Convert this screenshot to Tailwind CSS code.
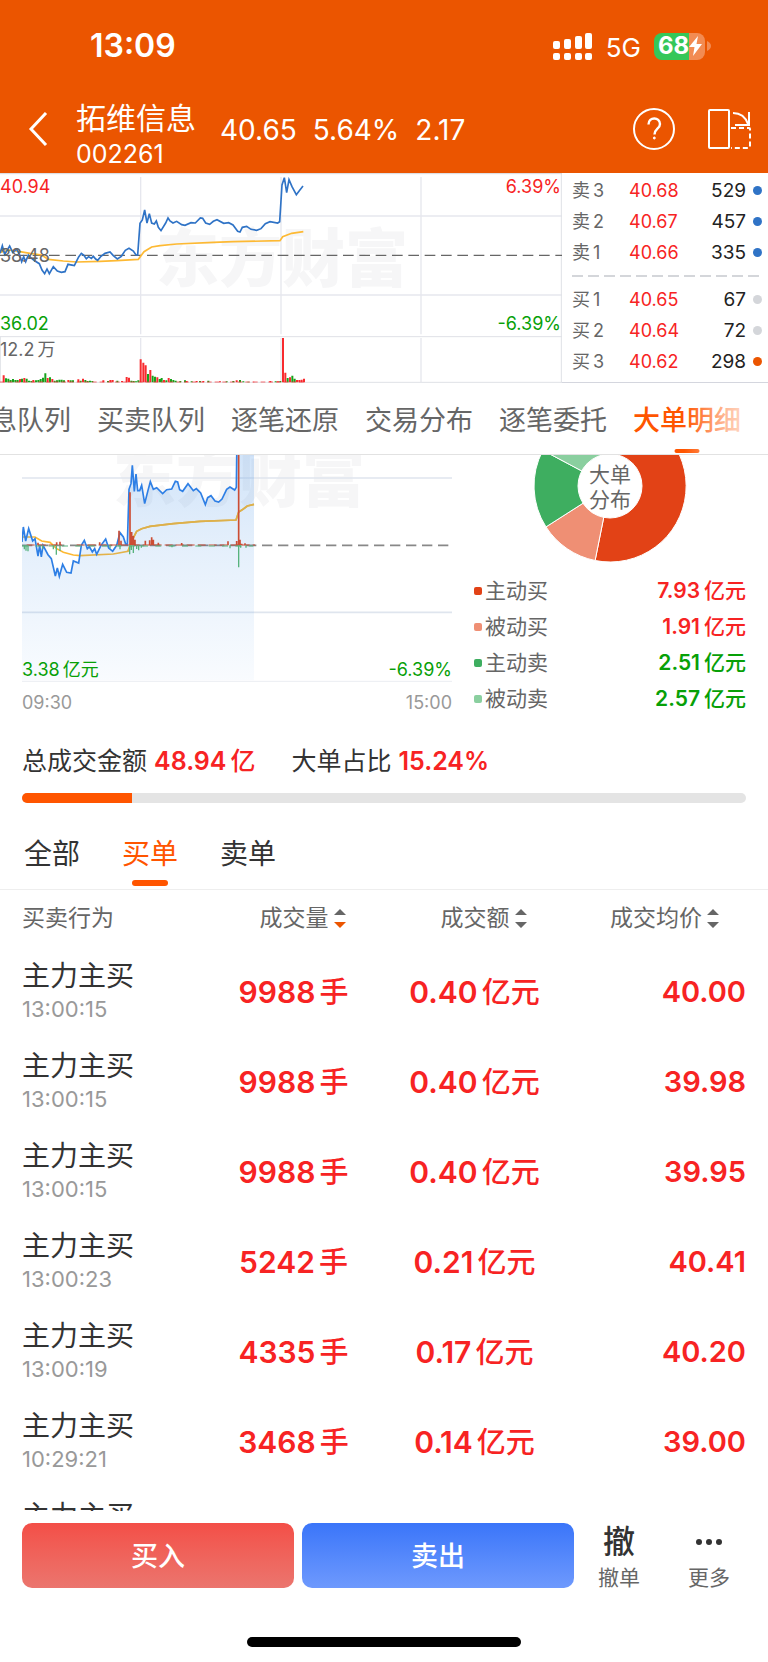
<!DOCTYPE html>
<html lang="zh-CN">
<head>
<meta charset="utf-8">
<meta name="viewport" content="width=device-width, initial-scale=1">
<title>拓维信息 002261</title>
<script src="https://cdn.jsdelivr.net/npm/@tailwindcss/browser@4"></script>
</head>
<body class="flex h-screen flex-col overflow-hidden bg-white font-[Inter,'Noto_Sans_CJK_SC',sans-serif] text-[#333]">

<header class="shrink-0 bg-[#eb5500] text-white">
  <!-- status bar -->
  <div class="flex h-[92px] items-center pr-[57px] pl-[90px]">
    <span class="text-[32px] font-semibold">13:09</span>
    <svg class="mr-[13px] ml-auto h-[28px] w-[40px]" viewBox="0 0 40 28" fill="#fff" aria-label="信号">
      <rect x="0" y="9" width="7" height="8" rx="2"/><rect x="11" y="7" width="7" height="10" rx="2"/><rect x="22" y="4" width="7" height="13" rx="2"/><rect x="32" y="1" width="7" height="16" rx="2"/>
      <rect x="0" y="21" width="7" height="7" rx="2"/><rect x="11" y="21" width="7" height="7" rx="2"/><rect x="22" y="21" width="7" height="7" rx="2"/><rect x="32" y="21" width="7" height="7" rx="2"/>
    </svg>
    <span class="mr-[13px] pt-[2px] text-[26px]">5G</span>
    <div class="flex items-center">
      <div class="flex h-[27px] w-[51px] items-center overflow-hidden rounded-[8px] bg-[linear-gradient(90deg,#34c759_68%,#f28b52_68%)] pl-[4px]">
        <span class="text-[24px] font-bold leading-none">68</span>
        <svg class="h-[20px] w-[13px]" viewBox="0 0 13 20" fill="#fff"><path d="M9 0 0 11h5.500L4 20l9-12H7.500z"/></svg>
      </div>
      <svg class="ml-[2px] h-[10px] w-[4px]" viewBox="0 0 4 10" fill="#f28b52"><path d="M0 0q4 2 4 5t-4 5z"/></svg>
    </div>
  </div>
  <!-- stock title bar -->
  <div class="flex h-[74px] items-center pr-4 pl-[28px]">
    <button type="button" aria-label="返回" class="mr-[28px]">
      <svg class="h-[34px] w-[20px]" viewBox="0 0 20 34" fill="none" stroke="#fff" stroke-width="3"><path d="M18 1 3 17l15 16"/></svg>
    </button>
    <h1 class="pt-[14px] leading-9">
      <span class="block text-[30px]">拓维信息</span>
      <span class="block text-[25px]">002261</span>
    </h1>
    <div class="ml-6 flex gap-4 pt-[2px] text-[28px]"><span>40.65</span><span>5.64%</span><span>2.17</span></div>
    <button type="button" aria-label="帮助" class="ml-auto">
      <svg class="h-[44px] w-[44px]" viewBox="0 0 44 44" fill="none" stroke="#fff" stroke-width="2"><circle cx="22" cy="22" r="20"/><path d="M16.500 17.500c0-8 11.500-8 11.500-.5 0 5-5.500 4.500-5.500 10.500" stroke-width="2.400"/><circle cx="22.300" cy="31" r="1" fill="#fff" stroke-width="1"/></svg>
    </button>
    <button type="button" aria-label="横屏" class="ml-[31px]">
      <svg class="h-[44px] w-[45px]" viewBox="0 0 45 44" fill="none" stroke="#fff" stroke-width="2"><rect x="2" y="3" width="20" height="38" rx="1"/><path d="M26 6q11 0 15 11M42 5v13H28"/><path d="M24 21h18q1 0 1 1v18q0 1-1 1H24" stroke-dasharray="5 3"/></svg>
    </button>
  </div>
  <div class="h-[7px]"></div>
</header>

<!-- intraday chart and order book -->
<section class="grid shrink-0 grid-cols-[562fr_206fr] text-[18px]">
  <div class="relative overflow-hidden">
    <div class="absolute top-[53px] left-[156px] text-[63px] leading-[64px] font-black text-[#f6f6f7]" aria-hidden="true">东方财富</div>
    <svg class="relative block w-full" viewBox="0 24 1686 630" fill="none">
      <g stroke="#e6e7ee" stroke-width="4">
        <path d="M0 153H1686M0 390H1686M422 36V508M422 519V652M843 36V508M843 519V652M1263 36V508M1263 519V652"/>
        <path d="M0 515H1686M0 652H1686M1684 24V654M1 515V652" stroke="#dfe1e6" stroke-width="3"/>
        <path d="M0 26H1686" stroke="#d8d8dc" stroke-width="3"/>
      </g>
      <path d="M0 271H1686" stroke="#666" stroke-width="4" stroke-dasharray="32 17"/>
      <path d="M0 262 30 255 60 260 90 265 125 270 145 283 190 288 230 291 300 289 350 287 415 283 432 260 455 246 480 242 530 237 640 232 700 230 840 227 848 215 875 205 910 200" stroke="#fdb933" stroke-width="5"/>
      <path d="M0 265 7 242 14 268 22 255 29 243 38 262 50 252 58 268 65 290 71 275 77 290 85 270 92 278 105 288 118 296 126 315 134 326 141 312 148 326 160 305 172 318 184 322 195 320 204 298 223 302 236 276 244 265 251 270 259 281 266 275 274 280 280 274 287 282 293 286 303 274 315 265 330 261 340 272 352 282 364 274 376 256 387 250 400 258 408 270 413 270 420 175 427 165 434 135 441 174 448 146 455 174 463 177 469 168 475 187 483 197 497 174 504 159 510 168 519 174 530 169 545 179 555 181 573 173 586 174 601 159 608 160 617 174 629 178 640 169 651 164 671 175 686 173 699 180 713 199 720 201 727 187 740 184 753 193 770 196 783 191 796 176 810 170 833 174 839 170 846 60 853 38 860 83 867 44 876 65 889 89 898 77 909 63" stroke="#2f73c6" stroke-width="5"/>
      <g stroke-width="6">
        <path stroke="#f82b2f" d="M11 652V631M60 652V642M73 652V639M100 652V645M143 652V639M157 652V642M205 652V645M235 652V643M249 652V641M310 652V646M331 652V645M338 652V645M366 652V648M380 652V636M387 652V638M422 652V583M430 652V593M437 652V601M451 652V615M472 652V637M492 652V645M506 652V639M560 652V648M590 652V648M610 652V648M660 652V649M710 652V646M760 652V650M811 652V648M834 652V649M849 652V519M856 652V623M870 652V637M891 652V645M898 652V645M905 652V644M912 652V641"/>
        <path stroke="#16a31b" d="M18 652V640M25 652V641M32 652V645M39 652V642M46 652V645M53 652V645M66 652V641M80 652V641M87 652V647M94 652V648M108 652V646M115 652V645M122 652V642M129 652V638M136 652V625M150 652V637M164 652V647M171 652V646M178 652V644M185 652V644M192 652V646M212 652V646M219 652V646M242 652V647M256 652V645M263 652V648M270 652V647M277 652V648M324 652V648M352 652V647M394 652V647M401 652V648M408 652V649M415 652V646M444 652V627M458 652V632M465 652V635M479 652V642M485 652V639M499 652V646M513 652V642M520 652V645M527 652V647M541 652V648M555 652V646M575 652V649M600 652V648M625 652V647M680 652V649M700 652V648M720 652V645M730 652V649M745 652V650M827 652V649M841 652V648M863 652V639M877 652V632M884 652V641"/>
        <path stroke="#f82b2f" stroke-width="2" d="M0 651H915" stroke-dasharray="14 9"/>
      </g>
    </svg>
    <div class="pointer-events-none absolute inset-0 leading-6">
      <span class="absolute top-[2px] left-0 text-[#f72323]">40.94</span>
      <span class="absolute top-[2px] right-[1px] text-[#f72323]">6.39%</span>
      <span class="absolute top-[71px] left-0 text-[#666]">38.48</span>
      <span class="absolute top-[139px] left-0 text-[#07a007]">36.02</span>
      <span class="absolute top-[139px] right-[1px] text-[#07a007]">-6.39%</span>
      <span class="absolute top-[165px] left-0 flex gap-[3px] text-[#666]">12.2<span>万</span></span>
    </div>
  </div>
  <div class="flex flex-col border-b border-[#d4d6de] pt-[2px] pr-[6px] pl-[10px]">
    <table class="w-full table-fixed">
      <tbody class="[&_td]:h-[31px] [&_td]:p-0 [&_td]:leading-6">
        <tr><td class="w-[57px] text-[#666]">卖<span class="ml-[3px]">3</span></td><td class="text-[#f72323]">40.68</td><td class="w-[62px] text-right text-[19px] text-[#222]">529</td><td class="w-[16px]"><i class="ml-auto block size-[9px] rounded-full bg-[#2f73c6]"></i></td></tr>
        <tr><td class="text-[#666]">卖<span class="ml-[3px]">2</span></td><td class="text-[#f72323]">40.67</td><td class="text-right text-[19px] text-[#222]">457</td><td><i class="ml-auto block size-[9px] rounded-full bg-[#2f73c6]"></i></td></tr>
        <tr><td class="text-[#666]">卖<span class="ml-[3px]">1</span></td><td class="text-[#f72323]">40.66</td><td class="text-right text-[19px] text-[#222]">335</td><td><i class="ml-auto block size-[9px] rounded-full bg-[#2f73c6]"></i></td></tr>
      </tbody>
    </table>
    <svg class="mt-[7px] mb-[7px] block h-[2px] w-full" aria-hidden="true"><path d="M0 1H187" stroke="#d4d6da" stroke-width="2" stroke-dasharray="11 5"/></svg>
    <table class="w-full table-fixed">
      <tbody class="[&_td]:h-[31px] [&_td]:p-0 [&_td]:leading-6">
        <tr><td class="w-[57px] text-[#666]">买<span class="ml-[3px]">1</span></td><td class="text-[#f72323]">40.65</td><td class="w-[62px] text-right text-[19px] text-[#222]">67</td><td class="w-[16px]"><i class="ml-auto block size-[9px] rounded-full bg-[#d4d6da]"></i></td></tr>
        <tr><td class="text-[#666]">买<span class="ml-[3px]">2</span></td><td class="text-[#f72323]">40.64</td><td class="text-right text-[19px] text-[#222]">72</td><td><i class="ml-auto block size-[9px] rounded-full bg-[#d4d6da]"></i></td></tr>
        <tr><td class="text-[#666]">买<span class="ml-[3px]">3</span></td><td class="text-[#f72323]">40.62</td><td class="text-right text-[19px] text-[#222]">298</td><td><i class="ml-auto block size-[9px] rounded-full bg-[#eb5500]"></i></td></tr>
      </tbody>
    </table>
  </div>
</section>

<!-- scrolling tab strip -->
<nav class="relative flex h-[72px] shrink-0 justify-end gap-[26px] overflow-hidden border-b border-[#e2e2e2] pr-[27px] text-[27px] text-[#666]">
  <button type="button" class="shrink-0 pt-[5px]">消息队列</button>
  <button type="button" class="shrink-0 pt-[5px]">买卖队列</button>
  <button type="button" class="shrink-0 pt-[5px]">逐笔还原</button>
  <button type="button" class="shrink-0 pt-[5px]">交易分布</button>
  <button type="button" class="shrink-0 pt-[5px]">逐笔委托</button>
  <button type="button" class="relative shrink-0 pt-[5px] font-medium text-[#ff5500]">大单明细<i class="absolute bottom-[1px] left-1/2 h-[4px] w-[25px] -translate-x-1/2 rounded-full bg-[#ff5500]"></i></button>
  <div class="pointer-events-none absolute inset-y-0 right-0 w-[84px] bg-linear-to-r from-white/0 via-white/60 to-white"></div>
</nav>

<!-- large-order chart and distribution -->
<section class="grid shrink-0 grid-cols-[430fr_272fr] gap-[22px] px-[22px]">
  <div>
    <div class="relative overflow-hidden">
      <div class="absolute -top-[9px] left-[91px] text-[63px] leading-[64px] font-black text-[#f6f6f7]" aria-hidden="true">东方财富</div>
      <svg class="relative block w-full" viewBox="66 209 1290 681" fill="none">
        <defs><linearGradient id="area" x1="0" y1="0" x2="0" y2="1"><stop offset="0" stop-color="#3085e4" stop-opacity=".24"/><stop offset=".45" stop-color="#3085e4" stop-opacity=".13"/><stop offset="1" stop-color="#3085e4" stop-opacity=".03"/></linearGradient></defs>
        <path d="M66 278H1356M66 681H1356" stroke="#dfe5ee" stroke-width="5"/>
        <path d="M66 888H1356" stroke="#ebedf2" stroke-width="3"/>
        <path d="M66 480H1356" stroke="#888" stroke-width="5" stroke-dasharray="31 17"/>
        <path d="M68 455H105L125 467 150 471 170 490 190 501 220 509 240 511 340 506 384 498 396 465 410 438 425 430 450 423 520 415 600 408 708 404 716 380 730 371 742 362 762 357" stroke="#fdb933" stroke-width="5"/>
        <path d="M66 470 70 425 77 467 86 430 98 467 105 460 114 512 119 480 124 515 129 480 144 508 154 520 166 572 172 548 178 573 188 537 200 561 213 563 220 527 236 533 244 480 253 465 262 490 268 484 277 500 284 490 290 507 303 480 317 461 326 488 338 498 350 480 360 442 370 455 377 476 382 478 387 312 393 295 397 240 403 318 408 266 413 316 419 316 425 300 434 355 444 315 451 289 460 312 470 307 488 325 500 313 515 311 526 288 533 290 539 313 548 318 564 295 580 316 589 310 602 323 616 358 623 337 633 331 645 347 656 350 666 341 680 312 690 305 704 314 709 306 711 150H762V885H66Z" fill="url(#area)"/>
        <path d="M66 470 70 425 77 467 86 430 98 467 105 460 114 512 119 480 124 515 129 480 144 508 154 520 166 572 172 548 178 573 188 537 200 561 213 563 220 527 236 533 244 480 253 465 262 490 268 484 277 500 284 490 290 507 303 480 317 461 326 488 338 498 350 480 360 442 370 455 377 476 382 478 387 312 393 295 397 240 403 318 408 266 413 316 419 316 425 300 434 355 444 315 451 289 460 312 470 307 488 325 500 313 515 311 526 288 533 290 539 313 548 318 564 295 580 316 589 310 602 323 616 358 623 337 633 331 645 347 656 350 666 341 680 312 690 305 704 314 709 306 711 150" stroke="#2e7fe5" stroke-width="5"/>
        <path d="M384 498 396 465 410 438 425 430 450 423 520 415 600 408 708 404 716 380 730 371 742 362 762 357" stroke="#ddb04b" stroke-width="5"/>
        <path d="M390 480V321M357 480V436M363 480V466M395 480V440M400 480V452M405 480V463M299 480V471M114 480V472M170 480V471M180 480V469M436 480V466M449 480V465M455 480V456M460 480V463M475 480V472M545 480V473M684 480V468M710 480V467M716 480V209M720 480V463M725 480V475M735 480V474" stroke="#cc4d34" stroke-width="5"/>
        <path d="M230 479H765M80 479H185" stroke="#cc4d34" stroke-width="3" stroke-dasharray="24 9"/>
        <path d="M73 480V492M78 480V496M84 480V498M128 480V490M160 480V492M169 480V508M180 480V497M330 480V489M360 480V492M389 480V507M394 480V494M400 480V503M410 480V491M416 480V495M424 480V487M516 480V486M690 480V489M716 480V546M722 480V487M738 480V487" stroke="#57b37d" stroke-width="4"/>
        <path d="M66 482H760" stroke="#57b37d" stroke-width="3" stroke-dasharray="18 22"/>
      </svg>
      <span class="absolute bottom-0 left-0 flex gap-[3px] text-[18px] leading-6 text-[#07a007]">3.38<span>亿元</span></span>
      <span class="absolute right-0 bottom-0 text-[18px] leading-6 text-[#07a007]">-6.39%</span>
    </div>
    <div class="flex h-[38px] items-center justify-between pt-[2px] text-[18px] text-[#999]"><span>09:30</span><span>15:00</span></div>
  </div>
  <div>
    <div class="relative h-[118px] overflow-hidden">
      <svg class="mx-auto block h-[115px] w-[272px]" viewBox="0 0 272 115" stroke="#fff" stroke-width="1">
        <path fill="#e24216" d="M136 31V-45A76 76 0 1 1 121.100 105.500Z"/>
        <path fill="#ef8f74" d="M136 31 121.100 105.500A76 76 0 0 1 72 71.900Z"/>
        <path fill="#3eae60" d="M136 31 72 71.900A76 76 0 0 1 68.900 -4.700Z"/>
        <path fill="#8acf9f" d="M136 31 68.900 -4.700A76 76 0 0 1 136 -45Z"/>
        <circle cx="136" cy="31" r="32" fill="#fff"/>
      </svg>
      <div class="absolute inset-x-0 top-[7px] text-center text-[21px] leading-[25px] text-[#666]">大单<br>分布</div>
    </div>
    <ul class="text-[21px] leading-9 text-[#666]">
      <li class="flex items-center"><i class="mr-[3px] size-[8px] rounded-[2px] bg-[#e24216]"></i>主动买<b class="ml-auto flex gap-1 font-semibold text-[#f72323]">7.93<span class="font-medium">亿元</span></b></li>
      <li class="flex items-center"><i class="mr-[3px] size-[8px] rounded-[2px] bg-[#ef8f74]"></i>被动买<b class="ml-auto flex gap-1 font-semibold text-[#f72323]">1.91<span class="font-medium">亿元</span></b></li>
      <li class="flex items-center"><i class="mr-[3px] size-[8px] rounded-[2px] bg-[#3eae60]"></i>主动卖<b class="ml-auto flex gap-1 font-semibold text-[#07a007]">2.51<span class="font-medium">亿元</span></b></li>
      <li class="flex items-center"><i class="mr-[3px] size-[8px] rounded-[2px] bg-[#8acf9f]"></i>被动卖<b class="ml-auto flex gap-1 font-semibold text-[#07a007]">2.57<span class="font-medium">亿元</span></b></li>
    </ul>
  </div>
</section>

<!-- turnover summary -->
<section class="shrink-0 px-[22px] pt-[21px]">
  <div class="flex gap-[36px] text-[25px] leading-10 text-[#333]">
    <p class="flex gap-[7px]">总成交金额<b class="flex gap-1 font-semibold text-[#f72323]">48.94<span class="font-medium">亿</span></b></p>
    <p class="flex gap-[7px]">大单占比<b class="font-semibold text-[#f72323]">15.24%</b></p>
  </div>
  <div class="mt-[12px] h-[10px] overflow-hidden rounded-full bg-[#e4e4e4]"><div class="h-full bg-[#ff5500]" style="width:15.24%"></div></div>
</section>

<nav class="flex h-[87px] shrink-0 gap-[42px] border-b border-[#eee] px-[24px] text-[28px] text-[#333]">
  <button type="button" class="pt-4">全部</button>
  <button type="button" class="relative pt-4 text-[#ff5500]">买单<i class="absolute bottom-[3px] left-1/2 h-[6px] w-[36px] -translate-x-1/2 rounded-full bg-[#ff5500]"></i></button>
  <button type="button" class="pt-4">卖单</button>
</nav>

<!-- order list -->
<main class="min-h-0 flex-1 overflow-hidden px-[22px]">
  <table class="w-full table-fixed">
    <thead class="text-[23px] text-[#666]">
      <tr class="h-[57px] [&_th]:p-0 [&_th]:font-normal">
        <th class="text-left">买卖行为</th>
        <th><button type="button" class="inline-flex items-center gap-[5px] pl-[18px]">成交量<svg class="h-[19px] w-[12px]" viewBox="0 0 12 19"><path fill="#666" d="M6 0l6 6H0z"/><path fill="#eb5500" d="M6 19l6-6H0z"/></svg></button></th>
        <th><button type="button" class="inline-flex items-center gap-[5px] pl-[18px]">成交额<svg class="h-[19px] w-[12px]" viewBox="0 0 12 19" fill="#666"><path d="M6 0l6 6H0zM6 19l6-6H0z"/></svg></button></th>
        <th class="text-right"><button type="button" class="mr-[27px] inline-flex items-center gap-[5px]">成交均价<svg class="h-[19px] w-[12px]" viewBox="0 0 12 19" fill="#666"><path d="M6 0l6 6H0zM6 19l6-6H0z"/></svg></button></th>
      </tr>
    </thead>
    <tbody class="text-[30px] font-semibold text-[#f72323] [&_td]:h-[90px] [&_td]:p-0 [&_td]:leading-[40px]">
      <tr><td class="font-normal"><div class="text-[28px] leading-[34px] text-[#333]">主力主买</div><div class="text-[22px] leading-[32px] text-[#999]">13:00:15</div></td><td class="text-center">9988<span class="ml-1 text-[29px] font-medium">手</span></td><td class="text-center">0.40<span class="ml-1 text-[29px] font-medium">亿元</span></td><td class="text-right text-[29px]">40.00</td></tr>
      <tr><td class="font-normal"><div class="text-[28px] leading-[34px] text-[#333]">主力主买</div><div class="text-[22px] leading-[32px] text-[#999]">13:00:15</div></td><td class="text-center">9988<span class="ml-1 text-[29px] font-medium">手</span></td><td class="text-center">0.40<span class="ml-1 text-[29px] font-medium">亿元</span></td><td class="text-right text-[29px]">39.98</td></tr>
      <tr><td class="font-normal"><div class="text-[28px] leading-[34px] text-[#333]">主力主买</div><div class="text-[22px] leading-[32px] text-[#999]">13:00:15</div></td><td class="text-center">9988<span class="ml-1 text-[29px] font-medium">手</span></td><td class="text-center">0.40<span class="ml-1 text-[29px] font-medium">亿元</span></td><td class="text-right text-[29px]">39.95</td></tr>
      <tr><td class="font-normal"><div class="text-[28px] leading-[34px] text-[#333]">主力主买</div><div class="text-[22px] leading-[32px] text-[#999]">13:00:23</div></td><td class="text-center">5242<span class="ml-1 text-[29px] font-medium">手</span></td><td class="text-center">0.21<span class="ml-1 text-[29px] font-medium">亿元</span></td><td class="text-right text-[29px]">40.41</td></tr>
      <tr><td class="font-normal"><div class="text-[28px] leading-[34px] text-[#333]">主力主买</div><div class="text-[22px] leading-[32px] text-[#999]">13:00:19</div></td><td class="text-center">4335<span class="ml-1 text-[29px] font-medium">手</span></td><td class="text-center">0.17<span class="ml-1 text-[29px] font-medium">亿元</span></td><td class="text-right text-[29px]">40.20</td></tr>
      <tr><td class="font-normal"><div class="text-[28px] leading-[34px] text-[#333]">主力主买</div><div class="text-[22px] leading-[32px] text-[#999]">10:29:21</div></td><td class="text-center">3468<span class="ml-1 text-[29px] font-medium">手</span></td><td class="text-center">0.14<span class="ml-1 text-[29px] font-medium">亿元</span></td><td class="text-right text-[29px]">39.00</td></tr>
      <tr><td class="font-normal"><div class="text-[28px] leading-[34px] text-[#333]">主力主买</div><div class="text-[22px] leading-[32px]">&nbsp;</div></td><td></td><td></td><td></td></tr>
    </tbody>
  </table>
</main>

<!-- trade bar -->
<footer class="shrink-0 bg-white pt-[12px] pb-[15px]">
  <div class="flex h-[65px] pr-[14px] pl-[22px]">
    <div class="grid flex-1 grid-cols-2 gap-2 text-[27px] font-medium text-white">
      <button type="button" class="rounded-[10px] bg-linear-to-b from-[#f34e47] to-[#eb756e] pt-[3px]">买入</button>
      <button type="button" class="rounded-[10px] bg-linear-to-b from-[#3a75f9] to-[#6e99fd] pt-[3px]">卖出</button>
    </div>
    <div class="grid w-[180px] grid-cols-2 text-[21px] text-[#666]">
      <button type="button" class="flex flex-col items-center"><span class="text-[32px] leading-[38px] font-medium text-[#333]">撤</span><span class="leading-[34px]">撤单</span></button>
      <button type="button" class="flex flex-col items-center"><svg class="h-[38px] w-[28px] shrink-0" viewBox="0 0 28 38" fill="#333"><circle cx="4" cy="19" r="3"/><circle cx="14" cy="19" r="3"/><circle cx="24" cy="19" r="3"/></svg><span class="leading-[34px]">更多</span></button>
    </div>
  </div>
  <div class="mx-auto mt-[49px] h-[10px] w-[274px] rounded-full bg-black"></div>
</footer>
</body>
</html>
